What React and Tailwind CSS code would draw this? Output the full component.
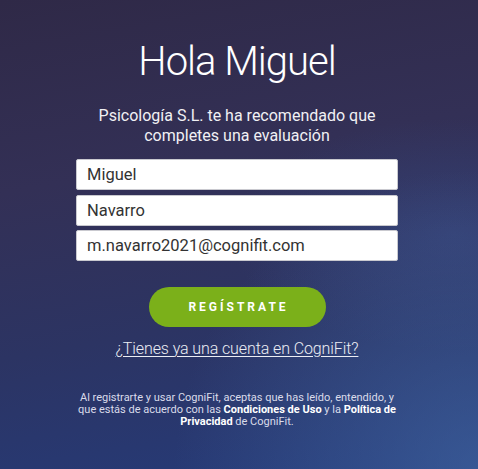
// Pantalla de registro recomendada (CogniFit)
import { useState } from "react";

export default function App() {
  const [nombre, setNombre] = useState("Miguel");
  const [apellido, setApellido] = useState("Navarro");
  const [email, setEmail] = useState("m.navarro2021@cognifit.com");

  return (
    <div
      className="relative w-full min-h-[469px] overflow-hidden text-white bg-[radial-gradient(ellipse_at_100%_100%,rgba(70,110,170,0.55)_0%,rgba(70,110,170,0)_45%),radial-gradient(ellipse_at_95%_50%,rgba(60,80,140,0.45)_0%,rgba(60,80,140,0)_35%),linear-gradient(170deg,#2f2947_0%,#333056_35%,#2c3463_65%,#253b7a_100%)]"
      style={{ fontFamily: "Roboto, 'Liberation Sans', sans-serif" }}
    >
      <div className="flex flex-col items-center pt-[37px] pr-[4px]">
        {/* TITULO */}
        <h1 className="text-[40px] leading-[50px] font-light tracking-[-1px]">Hola Miguel</h1>

        {/* SUBTITULO */}
        <p className="mt-[19px] text-[16px] leading-[20px] text-center text-[#f1f1f4]">
          Psicología S.L. te ha recomendado que
          <br />
          completes una evaluación
        </p>

        {/* CAMPOS */}
        <form className="mt-[13px] w-[322px] flex flex-col gap-[4.5px]" onSubmit={(e) => e.preventDefault()}>
          <input
            value={nombre}
            onChange={(e) => setNombre(e.target.value)}
            className="h-[31px] w-full bg-white rounded-[2px] border border-[#c9c9cf] px-[10px] text-[16.5px] text-[#333] outline-none"
          />
          <input
            value={apellido}
            onChange={(e) => setApellido(e.target.value)}
            className="h-[31px] w-full bg-white rounded-[2px] border border-[#c9c9cf] px-[10px] text-[16.5px] text-[#333] outline-none"
          />
          <input
            value={email}
            onChange={(e) => setEmail(e.target.value)}
            className="h-[31px] w-full bg-white rounded-[2px] border border-[#c9c9cf] px-[10px] text-[16.5px] text-[#333] outline-none"
          />

          {/* BOTON */}
          <div className="flex justify-center mt-[21px]">
            <button
              type="submit"
              className="w-[177px] h-[40px] rounded-full bg-[#7bb01a] text-white text-[12px] font-bold tracking-[3px] pl-[3px]"
            >
              REGÍSTRATE
            </button>
          </div>
        </form>

        {/* ENLACE */}
        <a href="#" className="mt-[12px] text-[16px] leading-[20px] font-light tracking-[-0.1px] text-[#eceef4] underline underline-offset-[2px] decoration-1">
          ¿Tienes ya una cuenta en CogniFit?
        </a>

        {/* LEGAL */}
        <p className="mt-[33px] w-[330px] text-center text-[11px] leading-[12px] text-[#dadcea]">
          Al registrarte y usar CogniFit, aceptas que has leído, entendido, y que estás de acuerdo con las{" "}
          <strong className="font-bold text-white">Condiciones de Uso</strong> y la{" "}
          <strong className="font-bold text-white">Política de Privacidad</strong> de CogniFit.
        </p>
      </div>
    </div>
  );
}
